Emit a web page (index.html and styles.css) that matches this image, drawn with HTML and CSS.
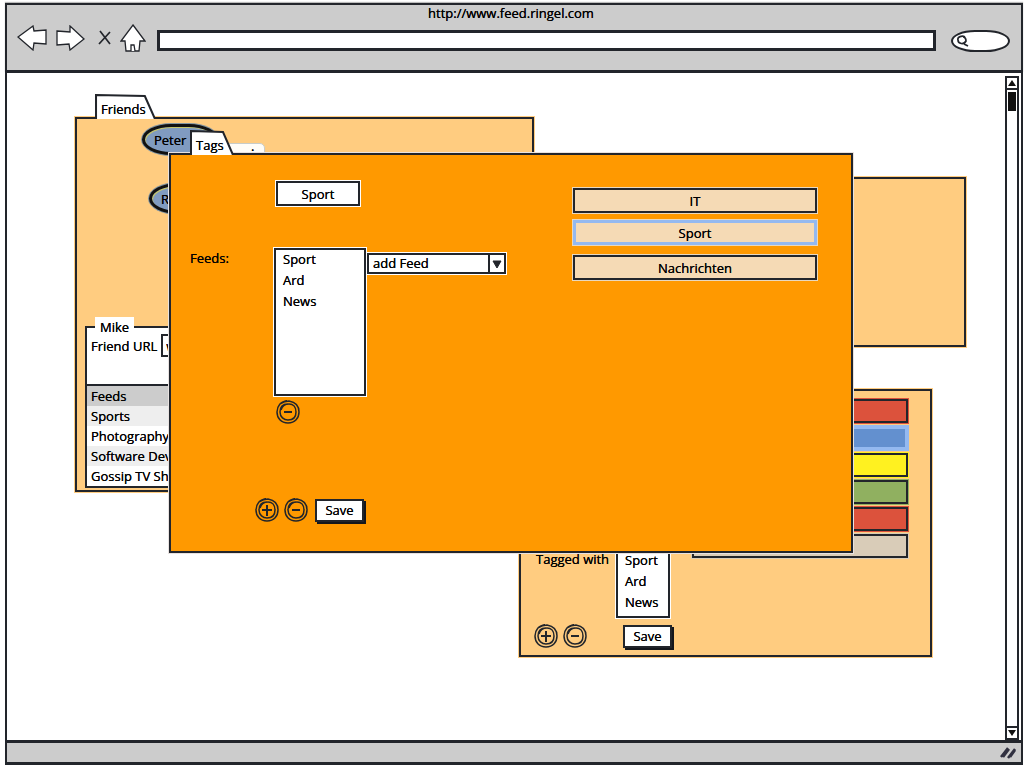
FILE: index.html
```html
<!DOCTYPE html>
<html lang="en">
<head>
<meta charset="utf-8">
<title>Feed Ringel</title>
<link rel="stylesheet" href="styles.css">
</head>
<body>
<svg class="defs" aria-hidden="true">
  <symbol id="plus" viewBox="0 0 24 24"><path d="M11 1C5 1 1 6 1 12c0 6 4 11 11 11s11-5 11-11C23 6 19 2 13 1 10 1 7 2 4 4M12 4c-5 0-8 3-8 8 0 5 4 8 8 8 5 0 8-3 8-8s-3-8-7-8c-4 0-7 3-8 6"/><path class="bold" d="M12 7v11M7 12l10 0"/></symbol>
  <symbol id="minus" viewBox="0 0 24 24"><path d="M11 1C5 1 1 6 1 12c0 6 4 11 11 11s11-5 11-11C23 6 19 2 13 1 10 1 7 2 4 4M12 4c-5 0-8 3-8 8 0 5 4 8 8 8 5 0 8-3 8-8s-3-8-7-8c-4 0-7 3-8 6"/><path class="bold" d="M8 12h8"/></symbol>
</svg>
<div class="browser">
  <header class="chrome">
    <div class="title">http://www.feed.ringel.com</div>
    <div class="toolbar">
      <button class="nav" aria-label="Back"><svg width="30" height="26" viewBox="0 0 30 26"><path d="M1 12 16 1l1 5 12-1v14l-12-1-1 7Z"/></svg></button>
      <button class="nav forward" aria-label="Forward"><svg width="30" height="26" viewBox="0 0 30 26"><path d="M1 6l13 1V1l14 13-14 11-1-6-12 1Z"/></svg></button>
      <button class="nav stop" aria-label="Stop"><svg width="14" height="16" viewBox="0 0 14 16"><path d="M2 1l10 13M12 2 1 14"/></svg></button>
      <button class="nav home" aria-label="Home"><svg width="26" height="28" viewBox="0 0 26 28"><path d="M13 1 25 17h-5l-1 10H6L5 17H1Z"/><path d="M11 27v-6h3l1 6"/></svg></button>
      <input class="address" type="text" aria-label="Address">
      <label class="search"><svg width="13" height="13" viewBox="0 0 13 13"><path d="M9 2C6 0 1 2 2 5c0 4 6 5 8 1 0-2-1-4-3-4M8 9l4 2"/></svg><input type="text" aria-label="Search"></label>
    </div>
  </header>

  <div class="view">
    <main class="desktop">
      <section class="window friends">
        <h2 class="tab"><svg viewBox="0 0 60 25" preserveAspectRatio="none"><path d="M1 25V1l48 1 10 23"/></svg><span>Friends</span></h2>
        <div class="panel light">
          <div class="friend"><button class="pill">Peter</button><span class="bubble">.</span></div>
          <div class="friend second"><button class="pill">R</button></div>
          <fieldset class="profile">
            <legend>Mike</legend>
            <div class="url"><label for="url">Friend URL</label><input id="url" type="text" value="www"></div>
            <table>
              <thead><tr><th>Feeds</th></tr></thead>
              <tbody><tr><td>Sports</td></tr><tr><td>Photography</td></tr><tr><td>Software Dev</td></tr><tr><td>Gossip TV Sho</td></tr></tbody>
            </table>
          </fieldset>
        </div>
      </section>

      <section class="window side"><div class="panel light"></div></section>

      <section class="window feed">
        <div class="panel light">
          <div class="details">
            <div class="field">
              <label for="tagged">Tagged with</label>
              <select id="tagged" class="list" multiple><option>Sport</option><option>Ard</option><option>News</option></select>
            </div>
            <div class="actions">
              <button class="round" aria-label="Add"><svg><use href="#plus"/></svg></button>
              <button class="round" aria-label="Remove"><svg><use href="#minus"/></svg></button>
              <button class="save">Save</button>
            </div>
          </div>
          <div class="colors">
            <button class="color red" aria-label="Red"></button>
            <button class="color blue" aria-label="Blue"></button>
            <button class="color yellow" aria-label="Yellow"></button>
            <button class="color green" aria-label="Green"></button>
            <button class="color red" aria-label="Red"></button>
            <button class="color gray" aria-label="Gray"></button>
          </div>
        </div>
      </section>

      <section class="window tags">
        <h2 class="tab"><svg viewBox="0 0 44 25" preserveAspectRatio="none"><path d="M1 25V1l32 1 10 23"/></svg><span>Tags</span></h2>
        <div class="panel strong">
          <form class="editor">
            <input class="name" type="text" value="Sport" aria-label="Tag name">
            <label class="caption" for="feeds">Feeds:</label>
            <div class="feeds">
              <select id="feeds" class="list" multiple><option>Sport</option><option>Ard</option><option>News</option></select>
              <div class="combo">
                <select aria-label="add Feed"><option>add Feed</option></select>
                <svg width="10" height="9" viewBox="0 0 10 9"><path d="M1 1h8L5 8Z"/></svg>
              </div>
            </div>
            <button type="button" class="round remove" aria-label="Remove feed"><svg><use href="#minus"/></svg></button>
            <div class="actions">
              <button type="button" class="round" aria-label="Add tag"><svg><use href="#plus"/></svg></button>
              <button type="button" class="round" aria-label="Remove tag"><svg><use href="#minus"/></svg></button>
              <button type="button" class="save">Save</button>
            </div>
          </form>
          <div class="choices">
            <button class="choice">IT</button>
            <button class="choice selected">Sport</button>
            <button class="choice last">Nachrichten</button>
          </div>
        </div>
      </section>
    </main>
    <div class="scrollbar">
      <button aria-label="Scroll up"><svg width="8" height="6" viewBox="0 0 8 6"><path d="M4 0l4 6H0Z"/></svg></button>
      <div class="track"><div class="thumb"></div></div>
      <button aria-label="Scroll down"><svg width="8" height="6" viewBox="0 0 8 6"><path d="M0 0h8L4 6Z"/></svg></button>
    </div>
  </div>

  <footer class="status"><svg width="18" height="16" viewBox="0 0 18 16"><path d="M2 12 9 3M4 12l6-8M9 13l7-9M11 12l5-7"/></svg></footer>
</div>
</body>
</html>
```

FILE: styles.css
```css
:root {
  --ink: #22252b;
  --light: #ffcc80;
  --strong: #ff9900;
  --sand: #f5dab5;
}
* { box-sizing: border-box; }
body {
  margin: 0;
  background: #fff;
  color: #000;
  font: 500 13px/20px "Open Sans", sans-serif;
  text-shadow: 0 0 0 #000;
}
button, input, select, h2 {
  margin: 0;
  padding: 0;
  border: 0;
  border-radius: 0;
  background: none;
  color: inherit;
  font: inherit;
  text-shadow: inherit;
  appearance: none;
}
svg { display: block; fill: none; stroke: var(--ink); }
.defs { position: absolute; width: 0; height: 0; }

.browser { display: flex; flex-direction: column; height: 100vh; padding: 3px 1px 3px 5px; }
.chrome { border: 2px solid var(--ink); border-bottom-width: 3px; background: #ccc; box-shadow: 0 -1px 1px #bbb; }
.title { height: 16px; line-height: 16px; padding-right: 6px; text-align: center; }
.toolbar { display: flex; align-items: center; padding: 2px 11px 18px 10px; }
.nav { flex: none; }
.nav svg { fill: #fff; stroke-width: 1.3; }
.forward { margin-left: 9px; }
.stop { margin-left: 12px; }
.nav.stop svg { fill: none; stroke-width: 1.7; }
.home { margin-left: 8px; }
.address { flex: 1; min-width: 0; height: 21px; margin: 6px 15px 0 11px; padding: 0 4px; border: 3px solid var(--ink); background: #fff; }
.search { display: flex; align-items: center; width: 59px; height: 22px; margin-top: 7px; padding-left: 3px; border: 2px solid var(--ink); border-radius: 24px / 11px; background: #fff; }
.search svg { flex: none; stroke-width: 1.7; }
.search input { width: 100%; min-width: 0; }

.view { display: flex; flex: 1; min-height: 0; border: solid var(--ink); border-width: 0 2px; }
.desktop { position: relative; flex: 1; overflow: hidden; }
.scrollbar { display: flex; flex-direction: column; width: 14px; margin: 3px 2px 0 0; border: 2px solid var(--ink); background: #fff; }
.scrollbar button { display: grid; place-items: center; height: 10px; }
.scrollbar svg { fill: #111; stroke: none; }
.track { flex: 1; padding: 2px 1px; border: solid var(--ink); border-width: 2px 0; }
.thumb { height: 19px; background: #111; }
.status { display: flex; align-items: center; justify-content: flex-end; height: 25px; padding-right: 4px; border: 3px solid var(--ink); border-width: 3px 2px; background: #ccc; }
.status svg { stroke: #303040; stroke-width: 2.5; }

.window { position: absolute; display: flex; flex-direction: column; }
.tab { position: relative; z-index: 1; align-self: flex-start; height: 25px; padding: 5px 10px 0 6px; }
.tab svg { position: absolute; inset: 0; width: 100%; height: 100%; fill: #fff; stroke-width: 2; }
.tab span { position: relative; }
.tab + .panel { margin-top: -2px; }
.panel { flex: 1; border: 2px solid var(--ink); }
.light { background: var(--light); box-shadow: 0 0 0 1px var(--light); }
.strong { background: var(--strong); box-shadow: 0 0 0 1px #e8e2e0; }

.friends { left: 68px; top: 21px; width: 459px; height: 395px; }
.friends .tab { width: 61px; margin-left: 20px; }
.side { left: 553px; top: 104px; width: 406px; height: 170px; }
.feed { left: 512px; top: 316px; width: 413px; height: 268px; }
.tags { left: 162px; top: 57px; width: 684px; height: 423px; }
.tags .tab { width: 44px; margin-left: 21px; }

.friends .panel { display: flex; flex-direction: column; padding: 5px 8px 2px; }
.friend { display: flex; margin-left: 57px; }
.second { margin: 28px 0 0 64px; }
.pill { width: 76px; height: 31px; padding-left: 9px; border: 3px solid #111; border-radius: 30px / 16px; background: #809bc0; box-shadow: inset 1px 1px 0 #c5c56a, 0 0 0 1px #8194a0; text-align: left; }
.bubble { width: 47px; height: 30px; margin: 19px 0 -18px; padding-left: 32px; border: 1px solid #c8ccc8; border-radius: 5px; background: #fffdf8; line-height: 4px; }
.profile { display: flex; flex-direction: column; flex: 1; min-height: 0; margin: 103px 0 0; padding: 0; border: 2px solid var(--ink); background: #fff; }
.profile legend { margin-left: 8px; padding: 0 5px; background: #fff; }
.url { display: flex; align-items: center; gap: 4px; margin-top: -3px; padding: 0 4px; }
.url input { flex: 1; min-width: 0; height: 23px; padding-left: 3px; border: 2px solid var(--ink); background: #fff; }
.profile table { width: 100%; margin-top: 27px; border-top: 2px solid var(--ink); border-spacing: 0; }
.profile th, .profile td { height: 20px; padding: 0 4px; font-weight: inherit; text-align: left; }
.profile th { background: #ccc; }
.profile tbody tr:nth-child(odd) { background: #eee; }

.list { overflow: hidden; border: 2px solid var(--ink); background: #fff; box-shadow: 0 0 0 1px #fff; }
.list option { min-height: 21px; padding: 0 7px; color: #000; font: inherit; line-height: 21px; text-shadow: inherit; }
.round svg { width: 24px; height: 24px; stroke-width: 1.5; }
.bold { stroke-width: 2; }
.actions { display: flex; align-items: center; gap: 5px; }
.save { width: 49px; height: 23px; border: 2px solid var(--ink); background: #fff; box-shadow: 2px 2px 0 #15171c; line-height: 18px; }

.feed .panel { display: flex; justify-content: space-between; padding: 8px 22px 7px 13px; }
.details { display: flex; flex-direction: column; justify-content: flex-end; }
.field { display: flex; gap: 8px; padding-left: 2px; }
.field label { width: 72px; white-space: nowrap; }
.field .list { width: 54px; height: 69px; }
.feed .actions { margin-top: 6px; }
.feed .save { margin-left: 31px; }
.colors { display: flex; flex-direction: column; gap: 3px; width: 216px; }
.color { height: 24px; border: 2px solid var(--ink); }
.red { background: #dc523c; box-shadow: 0 0 0 1px #dc523c; }
.blue { border: 3px solid #94b9f0; background: #6390cf; box-shadow: 0 0 0 1px #94b9f0; }
.yellow { background: #fff120; box-shadow: 0 0 0 1px #fff120; }
.green { background: #90b060; box-shadow: 0 0 0 1px #90b060; }
.gray { background: #d9ccb8; box-shadow: 0 0 0 1px #d9ccb8; }

.tags .panel { display: flex; justify-content: space-between; padding: 26px 34px 29px 19px; }
.editor { display: flex; flex-direction: column; align-items: flex-start; }
.name { width: 84px; height: 25px; margin-left: 86px; border: 2px solid var(--ink); background: #fff; box-shadow: 0 0 0 1px #fff; text-align: center; }
.caption { height: 20px; margin-top: 42px; }
.feeds { display: flex; gap: 1px; margin: -20px 0 0 84px; }
.feeds .list { width: 92px; height: 148px; }
.combo { position: relative; width: 139px; height: 21px; margin-top: 5px; border: 2px solid var(--ink); background: #fff; box-shadow: 0 0 0 1px #fff; }
.combo select { display: block; width: 121px; height: 17px; padding-left: 4px; border-right: 2px solid var(--ink); line-height: 17px; }
.combo svg { position: absolute; right: 2px; top: 5px; fill: var(--ink); }
.remove { margin: 4px 0 0 86px; }
.editor .actions { margin: auto 0 0 65px; }
.editor .save { margin-left: 2px; }
.choices { display: flex; flex-direction: column; gap: 7px; width: 244px; padding-top: 7px; }
.choice { height: 25px; border: 2px solid var(--ink); background: var(--sand); box-shadow: 0 0 0 1px #e8d8c0; }
.selected { border: 3px solid #94b9f0; }
.last { margin-top: 3px; }
```
